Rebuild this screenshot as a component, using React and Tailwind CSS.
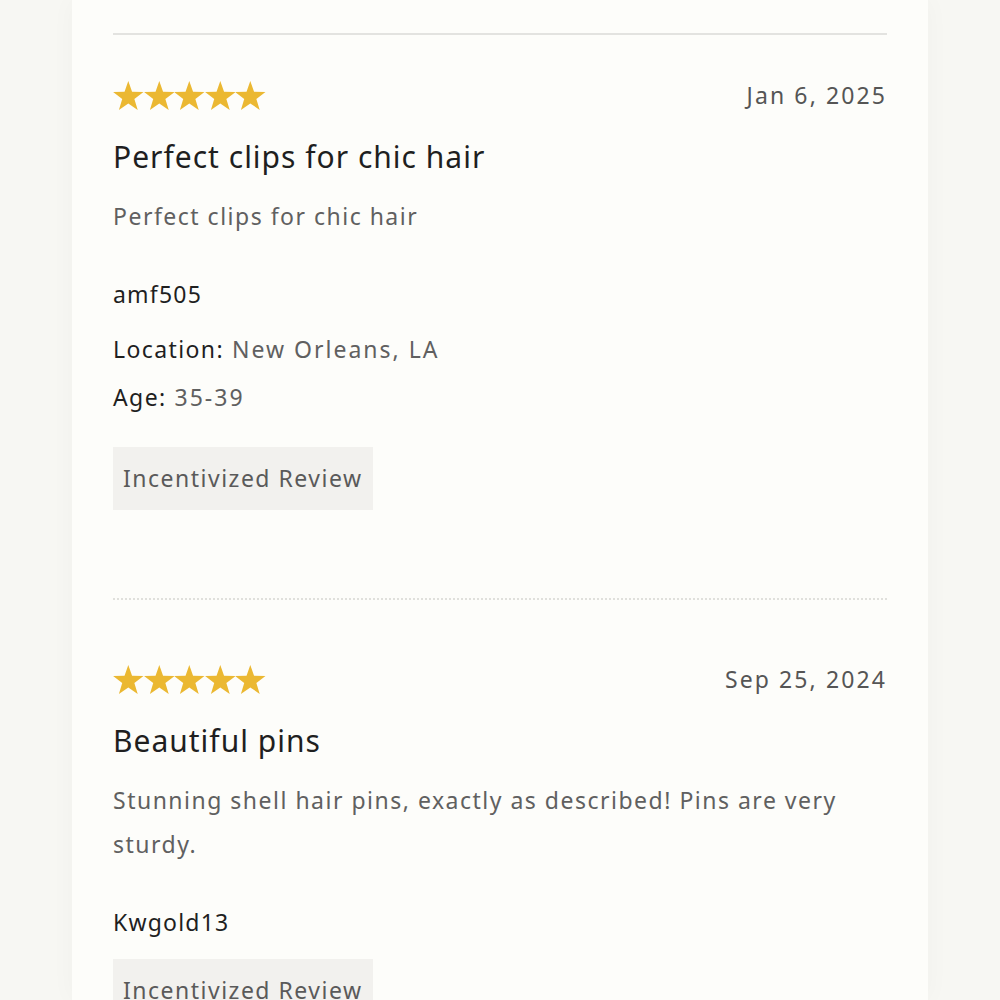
import React from "react";

function Star() {
  return (
    <svg width="30.6" height="29" viewBox="0 0 30.6 29.2" className="block">
      <path d="M15.3 0 L19.09 10.89 L30.6 11.13 L21.42 18.09 L24.77 29.12 L15.3 22.54 L5.83 29.12 L9.18 18.09 L0 11.13 L11.51 10.89 Z" fill="#ebb832" />
    </svg>
  );
}

function Stars() {
  return (
    <div className="flex">
      <Star /><Star /><Star /><Star /><Star />
    </div>
  );
}

function Badge() {
  return (
    <div className="inline-block bg-[#f2f1ee] px-[10px] py-[15px] text-[23px] leading-[33px] tracking-[1.5px] text-[#5a5a5a]">
      Incentivized Review
    </div>
  );
}

function Review({ date, title, body, user, location, age, first }) {
  return (
    <div>
      <div className={`flex items-center justify-between ${first ? "mt-[45px]" : "mt-[64px]"}`}>
        <Stars />
        <div className="text-[23px] leading-[30px] tracking-[2.1px] text-[#555]">{date}</div>
      </div>
      <div className="mt-[27px] text-[30px] leading-[40px] tracking-[1px] text-[#1f1f1f]">{title}</div>
      <div className="mt-[17px] text-[23px] leading-[44px] tracking-[1.5px] text-[#606060]">{body}</div>
      <div className="mt-[40px] text-[23px] leading-[32px] tracking-[1.2px] text-[#1f1f1f]">{user}</div>
      {location && (
        <div className="mt-[23px] text-[23px] leading-[32px] tracking-[2px]">
          <span className="text-[#1f1f1f] tracking-[1.4px]">Location:</span>{" "}
          <span className="text-[#606060]">{location}</span>
        </div>
      )}
      {age && (
        <div className="mt-[16px] text-[23px] leading-[32px] tracking-[2px]">
          <span className="text-[#1f1f1f] tracking-[1.4px]">Age:</span>{" "}
          <span className="text-[#606060]">{age}</span>
        </div>
      )}
      <div className={location ? "mt-[34px]" : "mt-[21px]"}>
        <Badge />
      </div>
    </div>
  );
}

export default function App() {
  return (
    <div className="h-[1000px] w-[1000px] overflow-hidden bg-[#f7f7f3] font-['Noto_Sans',sans-serif]">
      <div className="ml-[72px] h-full w-[856px] bg-[#fdfdfa] px-[41px] pt-[33px] shadow-[0_0_24px_rgba(0,0,0,0.03)]">
        <div className="h-[2px] bg-[#e3e3e0]" />
        <Review
          first
          date="Jan 6, 2025"
          title="Perfect clips for chic hair"
          body="Perfect clips for chic hair"
          user="amf505"
          location="New Orleans, LA"
          age="35-39"
        />
        <div className="mt-[88px] border-t-2 border-dotted border-[#e0e0dc]" />
        <Review
          date="Sep 25, 2024"
          title="Beautiful pins"
          body="Stunning shell hair pins, exactly as described! Pins are very sturdy."
          user="Kwgold13"
        />
      </div>
    </div>
  );
}
